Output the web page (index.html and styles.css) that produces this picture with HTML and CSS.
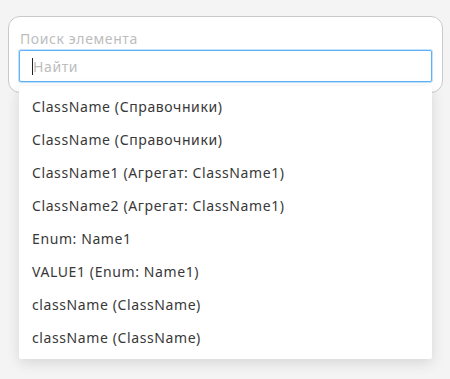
FILE: index.html
```html
<!DOCTYPE html>
<html lang="en">
  <head>
    <meta charset="UTF-8" />
    <title>Поиск элемента</title>
    <link rel="stylesheet" href="styles.css">
  </head>
  <body>
    <div class="search-card">
      <label class="search-label" for="find">Поиск элемента</label>
      <div class="search-field">
        <span class="caret"></span>
        <input id="find" class="search-input" type="text" placeholder="Найти" />
      </div>
      <ul class="results">
        <li>ClassName (Справочники)</li>
        <li>ClassName (Справочники)</li>
        <li>ClassName1 (Агрегат: ClassName1)</li>
        <li>ClassName2 (Агрегат: ClassName1)</li>
        <li>Enum: Name1</li>
        <li>VALUE1 (Enum: Name1)</li>
        <li>className (ClassName)</li>
        <li>className (ClassName)</li>
      </ul>
    </div>
  </body>
</html>
```

FILE: styles.css
```css
html {
  height: 100%;
}

body {
  box-sizing: border-box;
  min-height: 379px;
  margin: 0;
  padding: 16px 7px 0 8px;
  background: #f4f4f4;
  font-family: "Noto Sans", sans-serif;
  color: #333;
}

.search-card {
  position: relative;
  box-sizing: border-box;
  height: 77px;
  padding: 12px 10px 0 10px;
  background: #fff;
  border: 1px solid #c9c9c9;
  border-radius: 12px;
}

.search-label {
  display: block;
  height: 21px;
  padding-left: 1px;
  font-size: 14px;
  line-height: 20px;
  letter-spacing: 0.6px;
  color: #bdbdbd;
}

.search-field {
  position: relative;
}

.search-input {
  display: block;
  box-sizing: border-box;
  width: 100%;
  height: 32px;
  margin: 0;
  padding: 0 13px;
  font-family: inherit;
  font-size: 14px;
  letter-spacing: 0.6px;
  color: #333;
  border: 1px solid #5fb2f7;
  border-radius: 2px;
  box-shadow: 0 0 0 1px #c3e2fc;
  outline: none;
}

.search-input::placeholder {
  color: #bdbdbd;
}

.caret {
  position: absolute;
  left: 13px;
  top: 8px;
  width: 1px;
  height: 17px;
  background: #222;
}

.results {
  position: absolute;
  left: 10px;
  right: 10px;
  top: 69px;
  margin: 0;
  padding: 4px 0 5px;
  list-style: none;
  background: #fff;
  border-radius: 2px;
  box-shadow: 0 4px 14px rgba(0, 0, 0, 0.12);
}

.results li {
  height: 33px;
  padding: 0 13px;
  font-size: 14px;
  line-height: 33px;
  letter-spacing: 0.6px;
  color: #383838;
}
```
